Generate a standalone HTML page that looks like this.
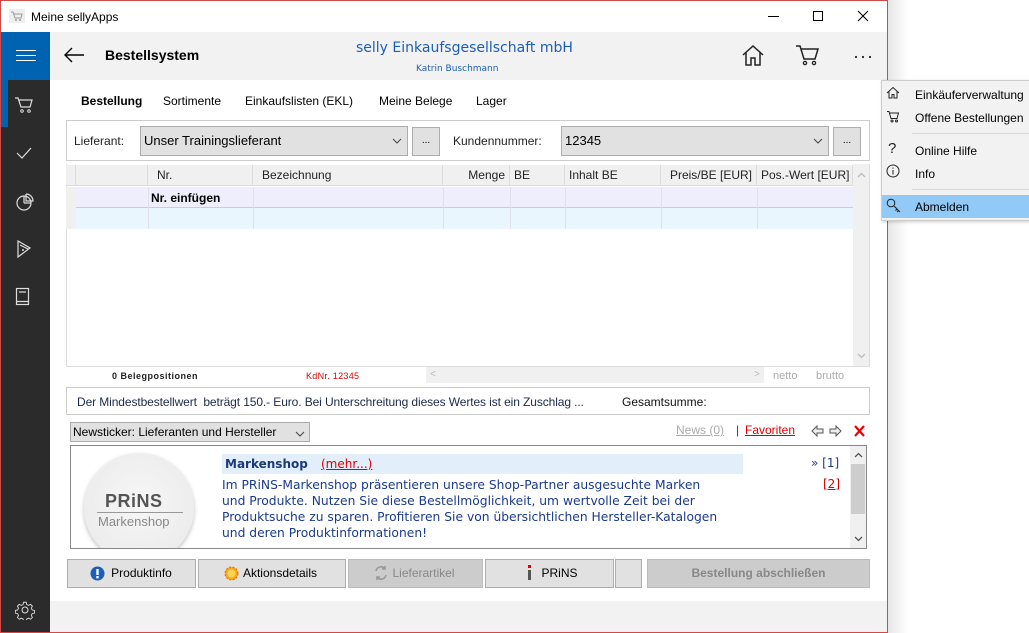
<!DOCTYPE html>
<html><head><meta charset="utf-8"><style>
*{box-sizing:border-box;margin:0;padding:0}
body{width:1029px;height:633px;position:relative;overflow:hidden;background:#fff;font-family:"Liberation Sans",Arial,sans-serif;font-size:12px;color:#000}
.a{position:absolute}
.t{position:absolute;white-space:nowrap;line-height:1}
.btn{position:absolute;background:#e1e1e1;border:1px solid #adadad;text-align:center;font-size:12px;line-height:26px}
.hd{position:absolute;top:0;height:21px;line-height:21px;border-right:1px solid #dcdcdc;font-size:12px;color:#222;padding:0 4px;white-space:nowrap}
.mi{position:absolute;left:915px;font-size:12px;white-space:nowrap;line-height:1}
</style></head><body>
<div class="a" style="left:888px;top:0;width:20px;height:633px;background:linear-gradient(to right,#e6e6e6,#fff)"></div>
<div class="a" style="left:0;top:0;width:888px;height:633px;border:1px solid #d04a4a"></div>
<svg class="a" style="left:9px;top:9px" width="16" height="14" viewBox="0 0 16 14"><rect x="0" y="0" width="16" height="14" fill="#eee"/><path d="M2 3h2l2 6h6l1-4H5" stroke="#999" fill="none"/><circle cx="7" cy="11" r="1" fill="#999"/><circle cx="11" cy="11" r="1" fill="#999"/></svg>
<div class="t" style="left:31px;top:11px;font-size:12px">Meine sellyApps</div>
<div class="a" style="left:768px;top:16px;width:11px;height:1px;background:#000"></div>
<div class="a" style="left:813px;top:11px;width:10px;height:10px;border:1px solid #000"></div>
<svg class="a" style="left:857px;top:10px" width="12" height="12"><path d="M1 1L11 11M11 1L1 11" stroke="#000" stroke-width="1.1"/></svg>
<div class="a" style="left:1px;top:32px;width:49px;height:600px;background:#2b2b2b"></div>
<div class="a" style="left:1px;top:32px;width:49px;height:48px;background:#0063b1"></div>
<div class="a" style="left:16px;top:50px;width:20px;height:1px;background:#fff"></div>
<div class="a" style="left:16px;top:55px;width:20px;height:1px;background:#fff"></div>
<div class="a" style="left:16px;top:60px;width:20px;height:1px;background:#fff"></div>
<div class="a" style="left:1px;top:80px;width:7px;height:47px;background:#0063b1"></div>
<svg class="a" style="left:14px;top:96px" width="20" height="18" viewBox="0 0 20 18"><path d="M1 2h3l3 9h9l2-7H5" stroke="#ddd" fill="none" stroke-width="1.2"/><circle cx="8" cy="15" r="1.3" stroke="#ddd" fill="none"/><circle cx="15" cy="15" r="1.3" stroke="#ddd" fill="none"/></svg>
<svg class="a" style="left:16px;top:146px" width="16" height="14"><path d="M1 7l5 5L15 2" stroke="#ddd" fill="none" stroke-width="1.2"/></svg>
<svg class="a" style="left:15px;top:192px" width="20" height="20"><circle cx="9" cy="11" r="7" stroke="#ddd" fill="none" stroke-width="1.2"/><path d="M9 11V4M9 11h7M11 2v7h7a7 7 0 0 0-7-7" stroke="#ddd" fill="none" stroke-width="1.2"/></svg>
<svg class="a" style="left:16px;top:239px" width="16" height="20"><path d="M2 2l12 7-12 9z M4 6l8 4" stroke="#ddd" fill="none" stroke-width="1.2"/><circle cx="7" cy="11" r="1" fill="#ddd"/></svg>
<svg class="a" style="left:15px;top:287px" width="16" height="20"><rect x="1.5" y="1.5" width="12" height="16" stroke="#ddd" fill="none" stroke-width="1.2"/><path d="M4 5h7M1.5 14.5h12" stroke="#ddd" stroke-width="1.2"/></svg>
<svg class="a" style="left:15px;top:600px" width="20" height="20" viewBox="0 0 20 20"><circle cx="10" cy="10" r="3" stroke="#ddd" fill="none"/><path d="M8.5 1.5h3l.5 2.5 2 1 2.3-1.2 2 2-1.2 2.3 1 2 2.5.5v3l-2.5.5-1 2 1.2 2.3-2 2-2.3-1.2-2 1-.5 2.5h-3l-.5-2.5-2-1-2.3 1.2-2-2 1.2-2.3-1-2-2.5-.5v-3l2.5-.5 1-2-1.2-2.3 2-2 2.3 1.2 2-1z" transform="scale(.9) translate(1 1)" stroke="#ddd" fill="none"/></svg>
<div class="a" style="left:50px;top:32px;width:837px;height:48px;background:#f2f2f2"></div>
<svg class="a" style="left:63px;top:46px" width="22" height="18"><path d="M21 9H2M9 2L2 9l7 7" stroke="#000" fill="none" stroke-width="1.4"/></svg>
<div class="t" style="left:105px;top:48px;font-size:14px;font-weight:bold">Bestellsystem</div>
<div class="t" style="left:356px;top:41px;color:#1c5fb5;font-family:'DejaVu Sans',sans-serif;font-size:14px">selly Einkaufsgesellschaft mbH</div>
<div class="t" style="left:416px;top:65px;font-size:9px;color:#1c5fb5;font-family:'DejaVu Sans',sans-serif">Katrin Buschmann</div>
<svg class="a" style="left:741px;top:44px" width="24" height="22"><path d="M2 11L12 2l10 9M5 8v13h5v-7h4v7h5V8" stroke="#222" fill="none" stroke-width="1.5"/></svg>
<svg class="a" style="left:795px;top:44px" width="26" height="22"><path d="M1 2h4l4 13h11l3-10H6" stroke="#222" fill="none" stroke-width="1.5"/><circle cx="10" cy="19" r="1.6" stroke="#222" fill="none" stroke-width="1.3"/><circle cx="19" cy="19" r="1.6" stroke="#222" fill="none" stroke-width="1.3"/></svg>
<svg class="a" style="left:854px;top:55px" width="20" height="4"><circle cx="2" cy="2" r="1.1" fill="#222"/><circle cx="9" cy="2" r="1.1" fill="#222"/><circle cx="16" cy="2" r="1.1" fill="#222"/></svg>
<div class="t" style="left:81px;top:95px;font-weight:bold">Bestellung</div>
<div class="t" style="left:163px;top:95px">Sortimente</div>
<div class="t" style="left:245px;top:95px">Einkaufslisten (EKL)</div>
<div class="t" style="left:379px;top:95px">Meine Belege</div>
<div class="t" style="left:476px;top:95px">Lager</div>
<div class="a" style="left:66px;top:120px;width:804px;height:41px;border:1px solid #ccc"></div>
<div class="t" style="left:74px;top:135px;color:#222">Lieferant:</div>
<div class="btn" style="left:140px;top:126px;width:268px;height:30px;text-align:left;padding-left:3px;line-height:28px;font-size:13px">Unser Trainingslieferant</div>
<svg class="a" style="left:392px;top:138px" width="10" height="6"><path d="M1 1l4 4 4-4" stroke="#444" fill="none"/></svg>
<div class="btn" style="left:412px;top:127px;width:28px;height:29px;font-size:10px">...</div>
<div class="t" style="left:453px;top:135px;color:#222">Kundennummer:</div>
<div class="btn" style="left:561px;top:126px;width:268px;height:30px;text-align:left;padding-left:3px;line-height:28px;font-size:13px">12345</div>
<svg class="a" style="left:813px;top:138px" width="10" height="6"><path d="M1 1l4 4 4-4" stroke="#444" fill="none"/></svg>
<div class="btn" style="left:833px;top:127px;width:28px;height:29px;font-size:10px">...</div>
<div class="a" style="left:66px;top:164px;width:804px;height:203px;border:1px solid #ddd;border-top:none"></div>
<div class="a" style="left:66px;top:165px;width:787px;height:21px;background:#f0f0f0;border-bottom:1px solid #ddd">
<div class="hd" style="left:0;width:10px;padding:0"></div>
<div class="hd" style="left:10px;width:72px"></div>
<div class="hd" style="left:82px;width:105px;padding-left:9px">Nr.</div>
<div class="hd" style="left:187px;width:190px;padding-left:9px">Bezeichnung</div>
<div class="hd" style="left:377px;width:67px;text-align:right">Menge</div>
<div class="hd" style="left:444px;width:55px">BE</div>
<div class="hd" style="left:499px;width:96px">Inhalt BE</div>
<div class="hd" style="left:595px;width:96px;text-align:right">Preis/BE [EUR]</div>
<div class="hd" style="left:691px;width:96px;text-align:right">Pos.-Wert [EUR]</div>
</div>
<div class="a" style="left:66px;top:187px;width:10px;height:42px;background:#f0f0f0"></div>
<div class="a" style="left:76px;top:187px;width:777px;height:21px;background:#eeeefc;border-bottom:1px solid #c9c9f0"></div>
<div class="t" style="left:151px;top:192px;font-weight:bold">Nr. einfügen</div>
<div class="a" style="left:76px;top:208px;width:777px;height:21px;background:#eaf6fd"></div>
<div class="a" style="left:148px;top:187px;width:1px;height:42px;background:#e0e0ec"></div>
<div class="a" style="left:253px;top:187px;width:1px;height:42px;background:#e0e0ec"></div>
<div class="a" style="left:443px;top:187px;width:1px;height:42px;background:#e0e0ec"></div>
<div class="a" style="left:510px;top:187px;width:1px;height:42px;background:#e0e0ec"></div>
<div class="a" style="left:565px;top:187px;width:1px;height:42px;background:#e0e0ec"></div>
<div class="a" style="left:661px;top:187px;width:1px;height:42px;background:#e0e0ec"></div>
<div class="a" style="left:757px;top:187px;width:1px;height:42px;background:#e0e0ec"></div>
<div class="a" style="left:853px;top:164px;width:16px;height:202px;background:#f0f0f0"></div>
<svg class="a" style="left:857px;top:172px" width="9" height="6"><path d="M1 5l3.5-3.5L8 5" stroke="#bbb" fill="none" stroke-width="1.3"/></svg>
<svg class="a" style="left:857px;top:353px" width="9" height="6"><path d="M1 1l3.5 3.5L8 1" stroke="#bbb" fill="none" stroke-width="1.3"/></svg>
<div class="t" style="left:112px;top:372px;font-size:9px;font-weight:bold;color:#222;letter-spacing:.5px">0 Belegpositionen</div>
<div class="t" style="left:306px;top:372px;font-size:9px;color:#d00;letter-spacing:.3px">KdNr. 12345</div>
<div class="a" style="left:426px;top:367px;width:338px;height:16px;background:#f0f0f0"></div>
<div class="t" style="left:430px;top:370px;font-size:10px;color:#bbb">&lt;</div>
<div class="t" style="left:754px;top:370px;font-size:10px;color:#bbb">&gt;</div>
<div class="t" style="left:773px;top:371px;font-size:11px;color:#aaa">netto</div>
<div class="t" style="left:816px;top:371px;font-size:11px;color:#aaa">brutto</div>
<div class="a" style="left:66px;top:387px;width:804px;height:28px;border:1px solid #ccc"></div>
<div class="t" style="left:77px;top:396px;font-size:12px;color:#1a2a4a;letter-spacing:-.1px">Der Mindestbestellwert&nbsp; beträgt 150.- Euro. Bei Unterschreitung dieses Wertes ist ein Zuschlag ...</div>
<div class="t" style="left:622px;top:396px;font-size:12px;color:#111">Gesamtsumme:</div>
<div class="a" style="left:70px;top:422px;width:240px;height:20px;background:#e1e1e1;border:1px solid #adadad"></div>
<div class="t" style="left:73px;top:426px;font-size:12px">Newsticker: Lieferanten und Hersteller</div>
<svg class="a" style="left:295px;top:431px" width="10" height="6"><path d="M1 1l4 4 4-4" stroke="#444" fill="none"/></svg>
<div class="t" style="left:676px;top:424px;font-size:12px;color:#aaa;text-decoration:underline">News (0)</div>
<div class="t" style="left:736px;top:424px;font-size:12px;color:#d00">|</div>
<div class="t" style="left:745px;top:424px;font-size:12px;color:#d00;text-decoration:underline">Favoriten</div>
<svg class="a" style="left:811px;top:425px" width="32" height="12"><path d="M1 6l5-5v3h6v4H6v3z" stroke="#555" fill="#eee"/><path d="M30 6l-5-5v3h-6v4h6v3z" stroke="#555" fill="#eee"/></svg>
<svg class="a" style="left:854px;top:425px" width="11" height="12"><path d="M1 1l9 10M10 1L1 11" stroke="#e00" stroke-width="2.2"/></svg>
<div class="a" style="left:70px;top:445px;width:797px;height:104px;border:1px solid #888;overflow:hidden;background:#fff">
<div class="a" style="left:13px;top:7px;width:110px;height:110px;border-radius:50%;background:radial-gradient(circle at 50% 45%,#f6f6f6 0%,#ececec 74%,#cfcfcf 80%,#dedede 86%,#bdbdbd 100%);box-shadow:0 2px 4px rgba(0,0,0,.25)"></div>
<div class="t" style="left:34px;top:46px;font-size:18px;font-weight:bold;color:#555;letter-spacing:.5px">PRiNS</div>
<div class="a" style="left:26px;top:66px;width:86px;height:1px;background:#999"></div>
<div class="t" style="left:27px;top:69px;font-size:13px;color:#888">Markenshop</div>
<div class="a" style="left:151px;top:8px;width:521px;height:20px;background:#e3eefb"></div>
<div class="t" style="left:154px;top:12px;font-weight:bold;color:#1b3a7a;font-family:'DejaVu Sans',sans-serif;font-size:12px">Markenshop</div>
<div class="t" style="left:250px;top:12px;font-size:12px;color:#d00;text-decoration:underline;font-family:'DejaVu Sans',sans-serif">(mehr...)</div>
<div class="a" style="left:151px;top:31px;font-size:12.3px;line-height:16px;color:#1b3a8a;font-family:'DejaVu Sans',sans-serif;white-space:nowrap">Im PRiNS-Markenshop präsentieren unsere Shop-Partner ausgesuchte Marken<br>und Produkte. Nutzen Sie diese Bestellmöglichkeit, um wertvolle Zeit bei der<br>Produktsuche zu sparen. Profitieren Sie von übersichtlichen Hersteller-Katalogen<br>und deren Produktinformationen!</div>
<div class="t" style="left:740px;top:11px;font-size:12px;color:#1b3a8a;font-family:'DejaVu Sans',sans-serif">» [1]</div>
<div class="t" style="left:752px;top:32px;font-size:12px;color:#d00;text-decoration:underline;font-family:'DejaVu Sans',sans-serif">[2]</div>
<div class="a" style="left:779px;top:0;width:16px;height:102px;background:#f0f0f0"></div>
<div class="a" style="left:780px;top:18px;width:14px;height:50px;background:#cdcdcd"></div>
<svg class="a" style="left:783px;top:6px" width="9" height="6"><path d="M1 5l3.5-3.5L8 5" stroke="#555" fill="none" stroke-width="1.3"/></svg>
<svg class="a" style="left:783px;top:90px" width="9" height="6"><path d="M1 1l3.5 3.5L8 1" stroke="#555" fill="none" stroke-width="1.3"/></svg>
</div>
<div class="btn" style="left:67px;top:559px;width:129px;height:29px;padding-left:20px">Produktinfo</div>
<svg class="a" style="left:90px;top:566px" width="15" height="15"><circle cx="7.5" cy="7.5" r="7" fill="#1d5fb8"/><rect x="6.3" y="3" width="2.4" height="6" fill="#fff"/><rect x="6.3" y="10" width="2.4" height="2.4" fill="#fff"/></svg>
<div class="btn" style="left:198px;top:559px;width:148px;height:29px;padding-left:16px">Aktionsdetails</div>
<svg class="a" style="left:224px;top:566px" width="15" height="15"><circle cx="7.5" cy="7.5" r="6.5" fill="#f5a623" stroke="#e07000" stroke-dasharray="2 1.5"/><circle cx="7.5" cy="7.5" r="4" fill="#fbd34d"/></svg>
<div class="btn" style="left:348px;top:559px;width:135px;height:29px;background:#cccccc;border-color:#bbb;color:#888;padding-left:16px">Lieferartikel</div>
<svg class="a" style="left:374px;top:565px" width="14" height="16"><path d="M2 6a5 5 0 0 1 9-2M12 10a5 5 0 0 1-9 2M11 1v3H8M3 15v-3h3" stroke="#999" fill="none" stroke-width="1.6"/></svg>
<div class="btn" style="left:485px;top:559px;width:129px;height:29px;padding-left:20px">PRiNS</div>
<div class="a" style="left:528px;top:565px;width:3px;height:3px;background:#d00"></div>
<div class="a" style="left:528px;top:570px;width:3px;height:10px;background:#555"></div>
<div class="btn" style="left:615px;top:559px;width:27px;height:29px"></div>
<div class="btn" style="left:647px;top:559px;width:223px;height:29px;background:#cccccc;border-color:#bbb;color:#888;font-weight:bold">Bestellung abschließen</div>
<div class="a" style="left:50px;top:601px;width:837px;height:31px;background:#f2f2f2"></div>
<div class="a" style="left:0;top:632px;width:888px;height:1px;background:#d04a4a"></div>
<div class="a" style="left:881px;top:80px;width:149px;height:141px;background:#f2f2f2;border:1px solid #ccc;box-shadow:1px 1px 3px rgba(0,0,0,.2)"></div>
<div class="a" style="left:912px;top:133px;width:117px;height:1px;background:#d8d8d8"></div>
<div class="a" style="left:912px;top:189px;width:117px;height:1px;background:#d8d8d8"></div>
<div class="a" style="left:882px;top:195px;width:147px;height:23px;background:#91c9f7"></div>
<svg class="a" style="left:886px;top:86px" width="14" height="13"><path d="M1 7l6-5.5L13 7M3 5.5V12h3V8.5h2V12h3V5.5" stroke="#222" fill="none"/></svg>
<div class="mi" style="top:89px">Einkäuferverwaltung</div>
<svg class="a" style="left:886px;top:110px" width="14" height="13"><path d="M1 1.5h2l2 7h6l1.5-5.5H4" stroke="#222" fill="none"/><circle cx="6" cy="11" r="1" stroke="#222" fill="none"/><circle cx="10.5" cy="11" r="1" stroke="#222" fill="none"/></svg>
<div class="mi" style="top:112px">Offene Bestellungen</div>
<div class="t" style="left:888px;top:141px;font-size:15px;color:#222">?</div>
<div class="mi" style="top:145px">Online Hilfe</div>
<svg class="a" style="left:886px;top:164px" width="14" height="14"><circle cx="7" cy="7" r="6" stroke="#222" fill="none"/><path d="M7 6v4.5M7 3.5v1.3" stroke="#222"/></svg>
<div class="mi" style="top:168px">Info</div>
<svg class="a" style="left:886px;top:198px" width="16" height="16"><circle cx="5" cy="5" r="3.8" stroke="#222" fill="none"/><path d="M7.5 7.5l6.5 6.5M11 11l-1.5 1.5M12.5 12.5l-1.5 1.5" stroke="#222" fill="none"/></svg>
<div class="mi" style="top:201px">Abmelden</div>
</body></html>
